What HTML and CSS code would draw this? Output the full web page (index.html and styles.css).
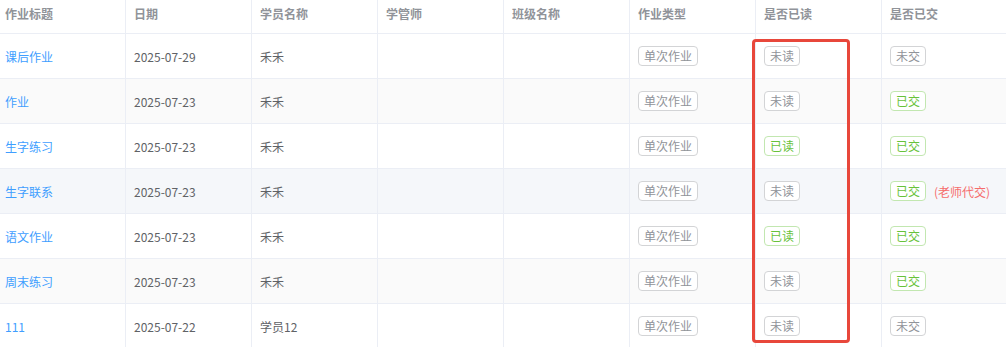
FILE: index.html
```html
<!DOCTYPE html>
<html lang="zh">
<head>
<meta charset="utf-8">
<link rel="stylesheet" href="styles.css">
</head>
<body>
<div class="table">
  <div class="row head">
    <div class="cell first">作业标题</div>
    <div class="cell">日期</div>
    <div class="cell">学员名称</div>
    <div class="cell">学管师</div>
    <div class="cell">班级名称</div>
    <div class="cell">作业类型</div>
    <div class="cell">是否已读</div>
    <div class="cell">是否已交</div>
  </div>
  <div class="row">
    <div class="cell first link">课后作业</div>
    <div class="cell">2025-07-29</div>
    <div class="cell">禾禾</div>
    <div class="cell"></div>
    <div class="cell"></div>
    <div class="cell"><span class="tag">单次作业</span></div>
    <div class="cell"><span class="tag">未读</span></div>
    <div class="cell"><span class="tag">未交</span></div>
  </div>
  <div class="row striped">
    <div class="cell first link">作业</div>
    <div class="cell">2025-07-23</div>
    <div class="cell">禾禾</div>
    <div class="cell"></div>
    <div class="cell"></div>
    <div class="cell"><span class="tag">单次作业</span></div>
    <div class="cell"><span class="tag">未读</span></div>
    <div class="cell"><span class="tag ok">已交</span></div>
  </div>
  <div class="row">
    <div class="cell first link">生字练习</div>
    <div class="cell">2025-07-23</div>
    <div class="cell">禾禾</div>
    <div class="cell"></div>
    <div class="cell"></div>
    <div class="cell"><span class="tag">单次作业</span></div>
    <div class="cell"><span class="tag ok">已读</span></div>
    <div class="cell"><span class="tag ok">已交</span></div>
  </div>
  <div class="row hover">
    <div class="cell first link">生字联系</div>
    <div class="cell">2025-07-23</div>
    <div class="cell">禾禾</div>
    <div class="cell"></div>
    <div class="cell"></div>
    <div class="cell"><span class="tag">单次作业</span></div>
    <div class="cell"><span class="tag">未读</span></div>
    <div class="cell"><span class="tag ok">已交</span><span class="note">(老师代交)</span></div>
  </div>
  <div class="row">
    <div class="cell first link">语文作业</div>
    <div class="cell">2025-07-23</div>
    <div class="cell">禾禾</div>
    <div class="cell"></div>
    <div class="cell"></div>
    <div class="cell"><span class="tag">单次作业</span></div>
    <div class="cell"><span class="tag ok">已读</span></div>
    <div class="cell"><span class="tag ok">已交</span></div>
  </div>
  <div class="row striped">
    <div class="cell first link">周末练习</div>
    <div class="cell">2025-07-23</div>
    <div class="cell">禾禾</div>
    <div class="cell"></div>
    <div class="cell"></div>
    <div class="cell"><span class="tag">单次作业</span></div>
    <div class="cell"><span class="tag">未读</span></div>
    <div class="cell"><span class="tag ok">已交</span></div>
  </div>
  <div class="row">
    <div class="cell first link">111</div>
    <div class="cell">2025-07-22</div>
    <div class="cell">学员12</div>
    <div class="cell"></div>
    <div class="cell"></div>
    <div class="cell"><span class="tag">单次作业</span></div>
    <div class="cell"><span class="tag">未读</span></div>
    <div class="cell"><span class="tag">未交</span></div>
  </div>
  <div class="highlight"></div>
</div>
</body>
</html>
```

FILE: styles.css
```css
html, body {
  margin: 0;
  padding: 0;
  background: #fff;
}
body {
  width: 1006px;
  height: 347px;
  overflow: hidden;
  font-family: "Noto Sans CJK SC", "Noto Sans", sans-serif;
  font-size: 12px;
  color: #606266;
}
.table {
  position: relative;
  width: 1006px;
}
.row {
  display: grid;
  grid-template-columns: 126px repeat(6, 126px) 124px;
  background: #fff;
}
.row.striped {
  background: #fafafa;
}
.row.hover {
  background: #f5f7fa;
}
.cell {
  box-sizing: border-box;
  height: 45px;
  display: flex;
  align-items: center;
  padding-left: 8px;
  border-bottom: 1px solid #ebeef5;
  border-right: 1px solid #ebeef5;
  white-space: nowrap;
}
.cell:last-child {
  border-right: none;
}
.cell.first {
  padding-left: 5px;
}
.head .cell {
  height: 34px;
  padding-bottom: 6px;
  color: #909399;
  font-weight: 600;
}
.link {
  color: #409eff;
}
.tag {
  box-sizing: border-box;
  display: inline-flex;
  align-items: center;
  height: 20px;
  padding: 0 5px;
  border: 1px solid #d3d4d6;
  border-radius: 4px;
  background: #fff;
  color: #909399;
  font-size: 12px;
  line-height: 18px;
}
.tag.ok {
  border-color: #c2e7b0;
  color: #67c23a;
}
.note {
  margin-left: 8px;
  color: #f56c6c;
}
.highlight {
  position: absolute;
  left: 752px;
  top: 39px;
  width: 98px;
  height: 304px;
  box-sizing: border-box;
  border: 3px solid #e8473b;
  border-radius: 4px;
  pointer-events: none;
}
```
